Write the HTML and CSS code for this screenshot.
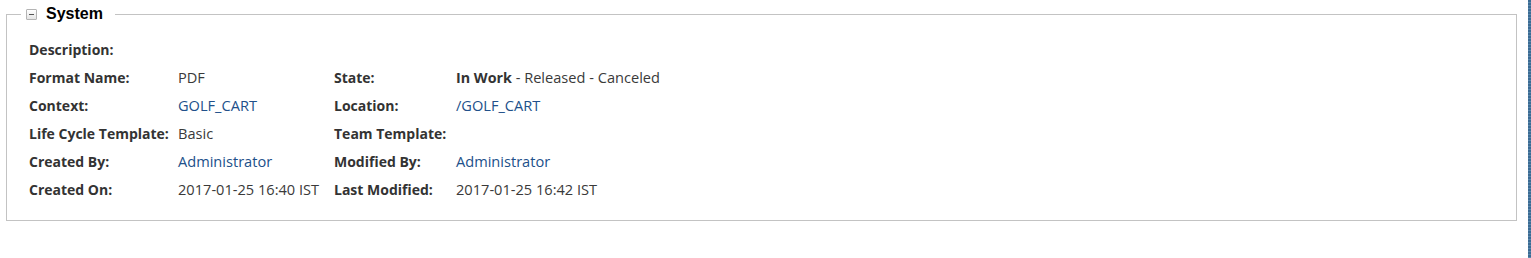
FILE: index.html
```html
<!DOCTYPE html>
<html>
<head>
<meta charset="utf-8">
<link rel="stylesheet" href="styles.css">
</head>
<body>
<div class="page">
  <main class="main">
    <fieldset class="panel">
      <legend class="panel-title">
        <span class="toggle"><span class="toggle-bar"></span></span>
        <span class="title-text">System</span>
      </legend>
      <div class="grid">
        <div class="label">Description:</div>
        <div class="value span3"></div>

        <div class="label">Format Name:</div>
        <div class="value">PDF</div>
        <div class="label">State:</div>
        <div class="value"><b class="current">In Work</b> - Released - Canceled</div>

        <div class="label">Context:</div>
        <div class="value link">GOLF_CART</div>
        <div class="label">Location:</div>
        <div class="value link">/GOLF_CART</div>

        <div class="label">Life Cycle Template:</div>
        <div class="value">Basic</div>
        <div class="label">Team Template:</div>
        <div class="value"></div>

        <div class="label">Created By:</div>
        <div class="value link">Administrator</div>
        <div class="label">Modified By:</div>
        <div class="value link">Administrator</div>

        <div class="label">Created On:</div>
        <div class="value">2017-01-25 16:40 IST</div>
        <div class="label">Last Modified:</div>
        <div class="value">2017-01-25 16:42 IST</div>
      </div>
    </fieldset>
  </main>
  <div class="edge"></div>
</div>
</body>
</html>
```
FILE: styles.css
```css
html, body {
  margin: 0;
  padding: 0;
  background: #fff;
}
body {
  font-family: "Open Sans", "Noto Sans", "Liberation Sans", sans-serif;
  font-size: 14px;
  color: #3a3a3a;
}
.page {
  display: flex;
  height: 258px;
}
.main {
  flex: 1;
  min-width: 0;
}
.edge {
  width: 3px;
  background-color: #3b6b93;
  background-image: repeating-linear-gradient(180deg, #3b6b93 0 2px, #5a88ad 2px 3px);
}
.panel {
  margin: 5px 11px 0 6px;
  padding: 0 22px 17px 22px;
  border: 1px solid #c3c3c3;
  min-width: 0;
}
.panel-title {
  margin-left: -8px;
  padding: 0 12px 0 5px;
  display: flex;
  align-items: center;
  height: 18px;
}
.toggle {
  width: 9px;
  height: 9px;
  border: 1px solid #b4b4b4;
  border-radius: 1px;
  background: linear-gradient(#ffffff, #e4e4e4);
  display: flex;
  align-items: center;
  justify-content: center;
  margin-right: 9px;
}
.toggle-bar {
  width: 5px;
  height: 1px;
  background: #555;
}
.title-text {
  font-family: "Liberation Sans", Arial, sans-serif;
  font-weight: bold;
  font-size: 16px;
  color: #000;
}
.grid {
  display: grid;
  grid-template-columns: 149px 156px 122px 1fr;
  grid-auto-rows: 28px;
  align-items: center;
  padding-top: 12px;
}
.label {
  font-weight: bold;
  font-size: 14px;
  color: #333;
  white-space: nowrap;
}
.value {
  font-size: 14.6px;
  color: #3a3a3a;
  white-space: nowrap;
}
.span3 {
  grid-column: span 3;
}
.current {
  font-weight: bold;
  font-size: 14.3px;
  color: #333;
}
.link {
  color: #21508a;
}
```
